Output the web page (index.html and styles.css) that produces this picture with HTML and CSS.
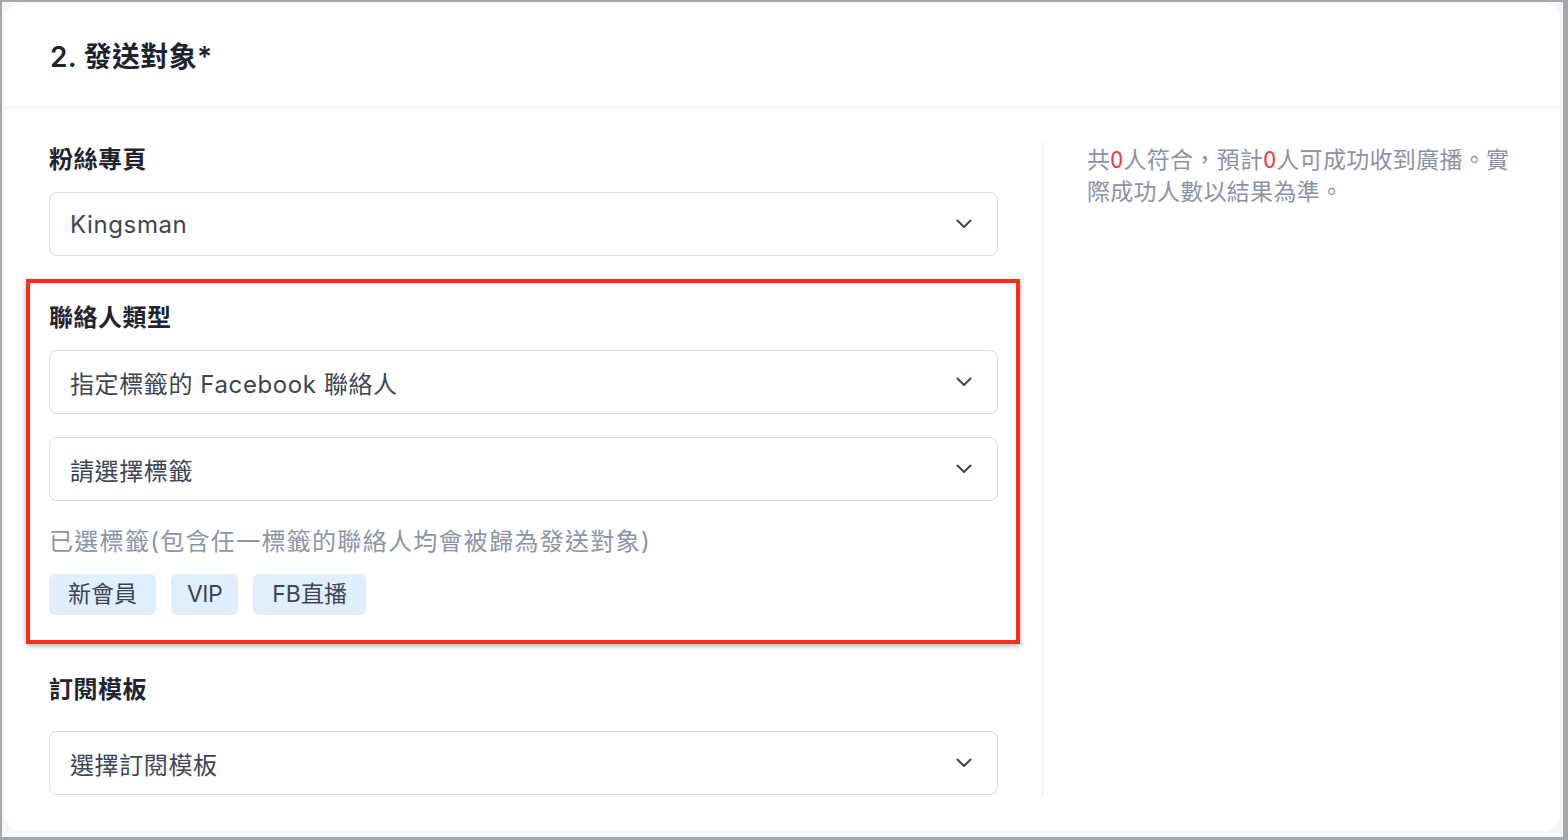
FILE: index.html
```html
<!DOCTYPE html>
<html lang="zh-Hant">
<head>
    <meta charset="UTF-8">
    <meta name="viewport" content="width=device-width, initial-scale=1.0">
    <title>發送對象</title>
    <link rel="stylesheet" href="styles.css">
</head>
<body>
    <div class="frame">
        <div class="card">
            <div class="card-header">
                <h2 class="card-title">2. 發送對象*</h2>
            </div>

            <div class="card-body">
                <div class="form-col">
                    <div class="field-label">粉絲專頁</div>
                    <div class="select">
                        <span>Kingsman</span>
                        <svg class="chevron" width="16" height="10" viewBox="0 0 16 10"><path d="M1.5 1.5 L8 8 L14.5 1.5" /></svg>
                    </div>

                    <!-- highlighted block -->
                    <div class="highlight">
                        <div class="field-label">聯絡人類型</div>
                        <div class="select">
                            <span>指定標籤的 Facebook 聯絡人</span>
                            <svg class="chevron" width="16" height="10" viewBox="0 0 16 10"><path d="M1.5 1.5 L8 8 L14.5 1.5" /></svg>
                        </div>
                        <div class="select select-next">
                            <span>請選擇標籤</span>
                            <svg class="chevron" width="16" height="10" viewBox="0 0 16 10"><path d="M1.5 1.5 L8 8 L14.5 1.5" /></svg>
                        </div>
                        <div class="hint">已選標籤(包含任一標籤的聯絡人均會被歸為發送對象)</div>
                        <div class="tags">
                            <span class="tag">新會員</span>
                            <span class="tag tag-latin">VIP</span>
                            <span class="tag">FB直播</span>
                        </div>
                    </div>

                    <div class="field-label field-label-last">訂閱模板</div>
                    <div class="select">
                        <span>選擇訂閱模板</span>
                        <svg class="chevron" width="16" height="10" viewBox="0 0 16 10"><path d="M1.5 1.5 L8 8 L14.5 1.5" /></svg>
                    </div>
                </div>

                <div class="summary">
                    <p>共<span class="count">0</span>人符合，預計<span class="count">0</span>人可成功收到廣播。實際成功人數以結果為準。</p>
                </div>
            </div>
        </div>
    </div>
</body>
</html>
```

FILE: styles.css
```css
body {
    margin: 0;
    background-color: #a6a7a9;
    font-family: Inter, "Noto Sans CJK TC", sans-serif;
    color: #1f2430;
}
.frame {
    margin: 2px 5px 3px 2px;
    height: 835px;
    background-color: #f3f6fb;
    overflow: hidden;
}
.card {
    margin: 1px 3px 0 3px;
    height: 828px;
    background-color: #fff;
    border-radius: 16px;
}
.card-header {
    height: 104px;
    display: flex;
    align-items: center;
    padding: 0 45px;
    border-bottom: 1px solid #eceef2;
}
.card-title {
    margin: 0;
    font-size: 28px;
    font-weight: 600;
    color: #1e2330;
    letter-spacing: 0.3px;
}
.card-body {
    display: flex;
    padding: 34px 40px 36px 44px;
}
.form-col {
    width: 949px;
    padding-top: 2px;
}
.field-label {
    font-size: 24px;
    line-height: 32px;
    font-weight: 700;
    letter-spacing: 0.5px;
    margin-bottom: 16px;
}
.field-label-last {
    margin-top: 30px;
    margin-bottom: 25px;
}
.select {
    box-sizing: border-box;
    height: 64px;
    display: flex;
    align-items: center;
    justify-content: space-between;
    padding: 0 25px 0 20px;
    border: 1px solid #d8dbe5;
    border-radius: 8px;
    font-size: 24px;
    letter-spacing: 0.6px;
    color: #3d4555;
}
.select-next {
    margin-top: 23px;
}
.chevron {
    fill: none;
    stroke: #3d4555;
    stroke-width: 2;
    stroke-linecap: round;
    stroke-linejoin: round;
}
.highlight {
    margin: 23px -22px 0 -23px;
    padding: 19px 18px 25px 19px;
    border: 4px solid #ff2d1b;
    box-shadow: 0 2px 5px rgba(0, 0, 0, 0.3);
}
.hint {
    margin-top: 25px;
    font-size: 24px;
    line-height: 32px;
    letter-spacing: 1.3px;
    color: #8c94a6;
}
.tags {
    display: flex;
    gap: 15px;
    margin-top: 16px;
}
.tag {
    height: 41px;
    line-height: 41px;
    padding: 0 19px;
    border-radius: 6px;
    background-color: #e1eefd;
    font-size: 23px;
    color: #3d4555;
}
.tag-latin {
    padding: 0 16px;
    letter-spacing: -0.5px;
}
.summary {
    flex: 1;
    margin-left: 44px;
    padding-left: 44px;
    border-left: 1px solid #e9ecf1;
}
.summary p {
    margin: 0;
    font-family: "Noto Sans CJK TC", sans-serif;
    font-size: 23px;
    line-height: 32px;
    letter-spacing: 0.3px;
    color: #8a93a6;
}
.count {
    color: #f5363c;
}
```
